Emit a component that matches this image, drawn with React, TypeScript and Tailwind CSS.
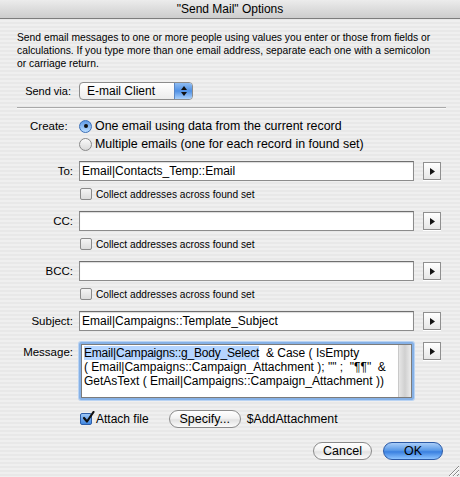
import React from 'react'

const stripes =
  'bg-[repeating-linear-gradient(180deg,#efefef_0px,#efefef_2px,#e8e8e8_2px,#e8e8e8_4px)]'

const ArrowButton = () => (
  <div className="ml-[9px] flex h-[18px] w-[18px] shrink-0 items-center justify-center border border-[#8f8f8f] bg-gradient-to-b from-[#ffffff] to-[#e6e6e6] shadow-[0_1px_0_#ffffff]">
    <svg width="5" height="7" viewBox="0 0 5 7">
      <path d="M0 0 L5 3.5 L0 7 Z" fill="#111" />
    </svg>
  </div>
)

const Field = ({ value }: { value?: string }) => (
  <div className="flex h-[20px] w-[335px] items-center border border-[#8c8c8c] border-t-[#6f6f6f] bg-white px-[2px] text-[12px] text-black shadow-[inset_0_1px_1px_rgba(0,0,0,0.15)]">
    {value}
  </div>
)

const Checkbox = ({ checked }: { checked?: boolean }) => (
  <div
    className={`relative flex h-[12px] w-[12px] shrink-0 items-center justify-center rounded-[2px] border ${
      checked
        ? 'border-[#2d5ea8] bg-gradient-to-b from-[#9cc7f7] to-[#3f86e0]'
        : 'border-[#8a8a8a] bg-gradient-to-b from-[#f4f4f4] to-[#dcdcdc]'
    }`}
  >
    {checked && (
      <svg
        width="13"
        height="13"
        viewBox="0 0 13 13"
        className="absolute left-[1px] top-[-3px]"
      >
        <path
          d="M2 7 L5 10.5 L11.5 1"
          fill="none"
          stroke="#111"
          strokeWidth="2.2"
          strokeLinecap="round"
          strokeLinejoin="round"
        />
      </svg>
    )}
  </div>
)

const Radio = ({ checked }: { checked?: boolean }) => (
  <div
    className={`flex h-[13px] w-[13px] shrink-0 items-center justify-center rounded-full border ${
      checked
        ? 'border-[#3a6fb8] bg-gradient-to-b from-[#5f9ae6] to-[#b9dcff]'
        : 'border-[#8a8a8a] bg-gradient-to-b from-[#fafafa] to-[#d9d9d9]'
    }`}
  >
    {checked && <div className="h-[4px] w-[4px] rounded-full bg-[#111]" />}
  </div>
)

const Pill = ({ label, blue, w }: { label: string; blue?: boolean; w: string }) => (
  <div
    className={`flex h-[18px] ${w} items-center justify-center rounded-full border text-[12.5px] text-black ${
      blue
        ? 'border-[#2c5aa6] bg-[linear-gradient(180deg,#a9cdf8_0%,#5c9be8_45%,#3a80e0_55%,#8cc3ff_100%)]'
        : 'border-[#8b8b8b] bg-[linear-gradient(180deg,#ffffff_0%,#f2f2f2_45%,#e2e2e2_55%,#fbfbfb_100%)]'
    }`}
  >
    {label}
  </div>
)

const FieldRow = ({ label, value }: { label: string; value?: string }) => (
  <div className="flex items-center">
    <div className="w-[62px] pr-[6px] text-right">{label}</div>
    <Field value={value} />
    <ArrowButton />
  </div>
)

const CollectRow = ({ className }: { className: string }) => (
  <div className={`flex h-[14px] items-center pl-[63px] ${className}`}>
    <Checkbox />
    <span className="ml-[4px] text-[10.2px]">Collect addresses across found set</span>
  </div>
)

export default function App() {
  return (
    <div
      className={`relative h-[477px] w-[460px] overflow-hidden ${stripes} font-['Liberation_Sans',Arial,sans-serif] text-[10.3px] leading-[13px] text-black`}
    >
      <div className="flex h-[19px] items-center justify-center border-b border-[#7d7d7d] bg-gradient-to-b from-[#ececec] to-[#cdcdcd] text-[12px]">
        "Send Mail" Options
      </div>

      <p className="whitespace-nowrap px-[17px] pt-[12px]">
        Send email messages to one or more people using values you enter or those from fields or
        <br />
        calculations. If you type more than one email address, separate each one with a semicolon
        <br />
        or carriage return.
      </p>

      <div className="pl-[17px]">
        <div className="mt-[12px] flex items-center">
          <div className="w-[62px] pr-[8px] text-right text-[11px]">Send via:</div>
          <div className="flex h-[18px] w-[114px] items-center overflow-hidden rounded-[4px] border border-[#8c8c8c] bg-gradient-to-b from-[#ffffff] to-[#ececec]">
            <span className="flex-1 pl-[7px] text-[12px]">E-mail Client</span>
            <div className="flex h-full w-[18px] flex-col items-center justify-center gap-[2px] border-l border-[#5a86c4] bg-gradient-to-b from-[#8fbdf3] via-[#4f90e4] to-[#a9d0fb]">
              <svg width="6" height="4" viewBox="0 0 6 4">
                <path d="M0 4 L3 0 L6 4 Z" fill="#111" />
              </svg>
              <svg width="6" height="4" viewBox="0 0 6 4">
                <path d="M0 0 L3 4 L6 0 Z" fill="#111" />
              </svg>
            </div>
          </div>
        </div>

        <div className="mt-[7px] mr-[14px] h-px bg-[#a9a9a9] shadow-[0_1px_0_#f8f8f8]" />

        <div className="mt-[9px] flex">
          <div className="w-[62px] pl-[13px] text-[11.5px] leading-[18px]">Create:</div>
          <div className="flex flex-col text-[12.4px]">
            <div className="flex h-[18px] items-center">
              <Radio checked />
              <span className="ml-[3px]">One email using data from the current record</span>
            </div>
            <div className="flex h-[18px] items-center">
              <Radio />
              <span className="ml-[3px]">Multiple emails (one for each record in found set)</span>
            </div>
          </div>
        </div>

        <div className="mt-[8px] text-[11.5px]">
          <FieldRow label="To:" value="Email|Contacts_Temp::Email" />
          <CollectRow className="mt-[6px]" />
          <div className="mt-[10px]">
            <FieldRow label="CC:" />
          </div>
          <CollectRow className="mt-[6px]" />
          <div className="mt-[10px]">
            <FieldRow label="BCC:" />
          </div>
          <CollectRow className="mt-[6px]" />
          <div className="mt-[10px]">
            <FieldRow label="Subject:" value="Email|Campaigns::Template_Subject" />
          </div>

          <div className="mt-[11px] flex items-start">
            <div className="w-[62px] pr-[6px] pt-[3px] text-right leading-[14px]">Message:</div>
            <div className="flex h-[58px] w-[335px] rounded-[2px] border-[2px] border-[#86b1e6] shadow-[0_0_0_1px_#b9d3f3]">
              <div className="flex flex-1 border border-[#7b7b7b] bg-white">
                <div className="flex-1 pl-[2px] pt-[1px] text-[12px] leading-[14px]">
                  <span className="bg-[#b5d5ff] tracking-[-0.2px]">Email|Campaigns::g_Body_Select</span>
                  &nbsp; &amp; Case ( IsEmpty
                  <br />( Email|Campaigns::Campaign_Attachment ); "" ;&nbsp; "¶¶"&nbsp; &amp;
                  <br />
                  GetAsText ( Email|Campaigns::Campaign_Attachment ))
                </div>
                <div className="w-[13px] border-l border-[#c9c9c9] bg-gradient-to-r from-[#e6e6e6] via-[#d0d0d0] to-[#ececec]" />
              </div>
            </div>
            <ArrowButton />
          </div>

          <div className="mt-[10px] flex h-[18px] items-center pl-[63px]">
            <Checkbox checked />
            <span className="ml-[4px] text-[12px]">Attach file</span>
            <div className="ml-[20px]">
              <Pill label="Specify..." w="w-[72px]" />
            </div>
            <span className="ml-[6px] text-[12.3px]">$AddAttachment</span>
          </div>
        </div>
      </div>

      <div className="mt-[14px] flex justify-end gap-[11px] pr-[17px]">
        <Pill label="Cancel" w="w-[59px]" />
        <Pill label="OK" blue w="w-[60px]" />
      </div>

      <svg
        className="absolute bottom-0 right-0"
        width="14"
        height="14"
        viewBox="0 0 14 14"
      >
        <path d="M13 3 L3 13 M13 7 L7 13 M13 11 L11 13" stroke="#8a8a8a" strokeWidth="1" />
        <path d="M13 4 L4 13 M13 8 L8 13" stroke="#ffffff" strokeWidth="1" />
      </svg>
    </div>
  )
}
